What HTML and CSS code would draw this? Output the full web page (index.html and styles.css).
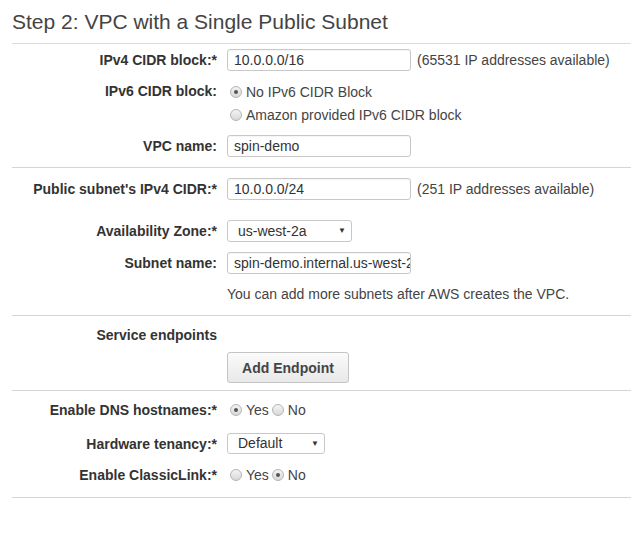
FILE: index.html
```html
<!DOCTYPE html>
<html>
<head>
<meta charset="utf-8">
<link rel="stylesheet" href="styles.css">
</head>
<body>
<div class="page">
  <h1 class="title">Step 2: VPC with a Single Public Subnet</h1>

  <div class="section s1">
    <div class="row r-ipv4">
      <div class="label">IPv4 CIDR block:*</div>
      <div class="control"><span class="input">10.0.0.0/16</span><span class="note">(65531 IP addresses available)</span></div>
    </div>
    <div class="row r-ipv6">
      <div class="label lab-line">IPv6 CIDR block:</div>
      <div class="control col">
        <div class="radio-line"><span class="radio on"></span><span class="rtext">No IPv6 CIDR Block</span></div>
        <div class="radio-line"><span class="radio"></span><span class="rtext">Amazon provided IPv6 CIDR block</span></div>
      </div>
    </div>
    <div class="row r-vpc">
      <div class="label">VPC name:</div>
      <div class="control"><span class="input">spin-demo</span></div>
    </div>
  </div>

  <div class="section s2">
    <div class="row r-pub">
      <div class="label">Public subnet's IPv4 CIDR:*</div>
      <div class="control"><span class="input">10.0.0.0/24</span><span class="note">(251 IP addresses available)</span></div>
    </div>
    <div class="row r-az">
      <div class="label">Availability Zone:*</div>
      <div class="control"><span class="select sel-az">us-west-2a<span class="arrow">▼</span></span></div>
    </div>
    <div class="row r-sn">
      <div class="label">Subnet name:</div>
      <div class="control"><span class="input clip">spin-demo.internal.us-west-2a</span></div>
    </div>
    <div class="row r-help">
      <div class="label"></div>
      <div class="control help">You can add more subnets after AWS creates the VPC.</div>
    </div>
  </div>

  <div class="section s3">
    <div class="row r-se">
      <div class="label">Service endpoints</div>
      <div class="control"></div>
    </div>
    <div class="row r-btn">
      <div class="label"></div>
      <div class="control"><span class="button">Add Endpoint</span></div>
    </div>
  </div>

  <div class="section s4">
    <div class="row r-dns">
      <div class="label">Enable DNS hostnames:*</div>
      <div class="control"><span class="radio on"></span><span class="rtext">Yes</span><span class="radio second"></span><span class="rtext">No</span></div>
    </div>
    <div class="row r-ht">
      <div class="label">Hardware tenancy:*</div>
      <div class="control"><span class="select sel-def">Default<span class="arrow">▼</span></span></div>
    </div>
    <div class="row r-cl">
      <div class="label">Enable ClassicLink:*</div>
      <div class="control"><span class="radio"></span><span class="rtext">Yes</span><span class="radio second on"></span><span class="rtext">No</span></div>
    </div>
  </div>
</div>
</body>
</html>
```
FILE: styles.css
```css
html, body {
  margin: 0;
  padding: 0;
  background: #fff;
}
body {
  font-family: "Liberation Sans", Arial, sans-serif;
  font-size: 14px;
  color: #444;
}
.page {
  padding-left: 12px;
}
.title {
  margin: 0;
  padding-top: 9px;
  height: 34px;
  box-sizing: border-box;
  font-size: 21px;
  font-weight: normal;
  line-height: 25px;
  color: #444;
  border-bottom: 1px solid #dcdcdc;
}
.title {
  height: 44px;
  padding-top: 9px;
}
.section {
  border-bottom: 1px solid #d5d5d5;
}
.row {
  display: grid;
  grid-template-columns: 205px 1fr;
  column-gap: 10px;
  align-items: center;
}
.label {
  text-align: right;
  font-weight: bold;
  color: #333;
}
.control {
  display: flex;
  align-items: center;
}
.control.col {
  flex-direction: column;
  align-items: flex-start;
}
.input {
  box-sizing: border-box;
  width: 184px;
  height: 22px;
  border: 1px solid #c8c8c8;
  border-radius: 3px;
  padding: 0 6px;
  line-height: 20px;
  color: #333;
  white-space: nowrap;
  overflow: hidden;
  box-shadow: inset 0 1px 1px rgba(0,0,0,0.04);
}
.note {
  margin-left: 6px;
  color: #444;
}
.radio-line {
  height: 23px;
  display: flex;
  align-items: center;
}
.radio {
  box-sizing: border-box;
  width: 12px;
  height: 12px;
  border-radius: 50%;
  border: 1px solid #b4b4b4;
  background: linear-gradient(#f4f4f4, #d8d8d8);
  margin-left: 3px;
  margin-right: 4px;
  position: relative;
  flex: none;
}
.radio.on::after {
  content: "";
  position: absolute;
  left: 3px;
  top: 3px;
  width: 4px;
  height: 4px;
  border-radius: 50%;
  background: #555;
}
.radio.second {
  margin-left: 3px;
}
.rtext {
  color: #444;
}
.select {
  box-sizing: border-box;
  height: 22px;
  border: 1px solid #c8c8c8;
  border-radius: 3px;
  padding: 0 10px;
  line-height: 20px;
  color: #333;
  position: relative;
  background: #fff;
}
.sel-az { width: 125px; }
.sel-def { width: 98px; }
.arrow {
  position: absolute;
  right: 5px;
  top: 0;
  font-size: 8px;
  color: #333;
}
.help {
  color: #444;
}
.button {
  box-sizing: border-box;
  width: 122px;
  height: 31px;
  border: 1px solid #c4c4c4;
  border-radius: 3px;
  background: linear-gradient(#fbfbfb, #e8e8e8);
  display: flex;
  align-items: center;
  justify-content: center;
  font-weight: bold;
  color: #444;
}
/* vertical rhythm */
.r-ipv4 { margin-top: 5px; height: 22px; }
.r-ipv6 { margin-top: 9px; align-items: start; }
.lab-line { line-height: 23px; }
.r-vpc { margin-top: 9px; height: 22px; }
.s1 { padding-bottom: 10px; }
.r-pub { margin-top: 10px; height: 22px; }
.r-az { margin-top: 20px; height: 22px; }
.r-sn { margin-top: 10px; height: 22px; }
.r-help { margin-top: 10px; height: 20px; }
.s2 { padding-bottom: 11px; }
.r-se { margin-top: 9px; height: 20px; }
.r-btn { margin-top: 7px; }
.s3 { padding-bottom: 7px; }
.r-dns { margin-top: 8px; height: 22px; }
.r-ht { margin-top: 12px; height: 21px; }
.r-ht .select { height: 21px; line-height: 19px; }
.r-cl { margin-top: 10px; height: 22px; }
.s4 { padding-bottom: 11px; }
```
